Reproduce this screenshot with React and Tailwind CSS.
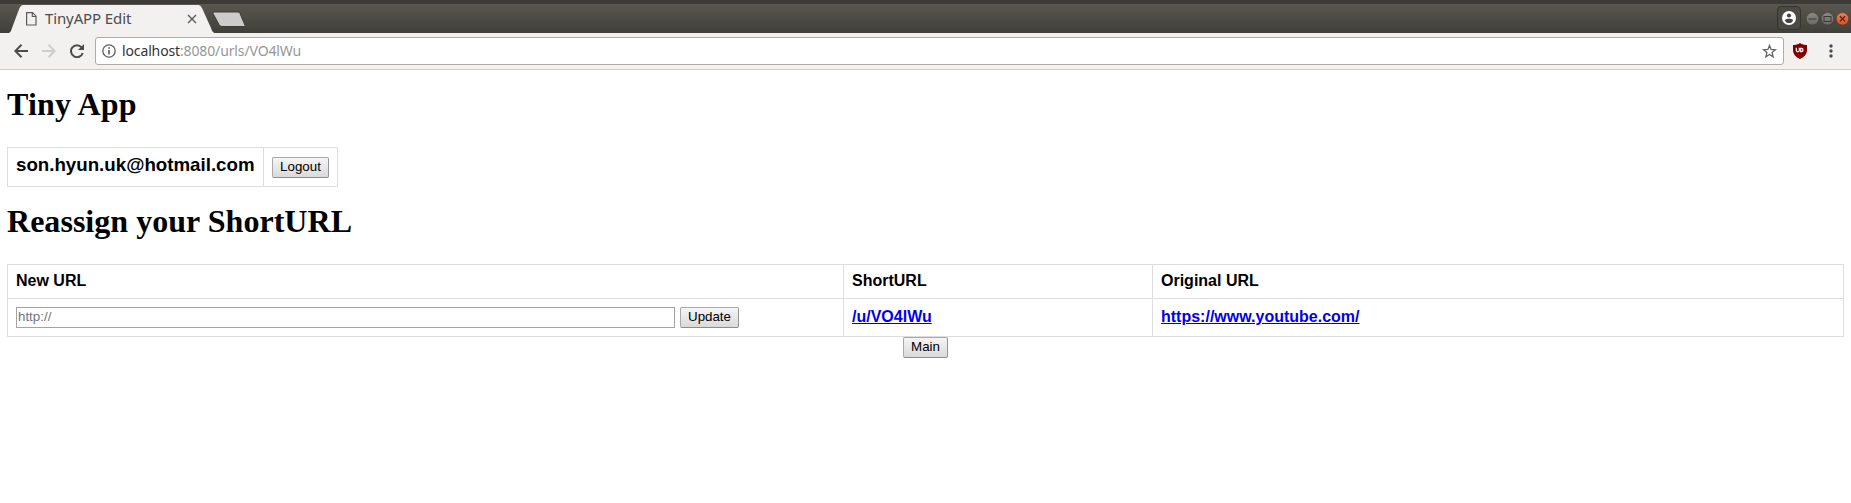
const buttonClass =
  'flex h-[21px] items-center justify-center rounded-[2px] border border-[#a9a9a9] border-b-[#8c8c8c] border-r-[#929292] bg-linear-to-b from-[#f5f5f5] to-[#dadada] pb-px text-[13.33px] leading-none text-black'

function WindowControls() {
  return (
    <svg width="50" height="29" viewBox="21 0 50 29" className="block">
      <defs>
        <linearGradient id="grey" x1="0" y1="0" x2="0" y2="1">
          <stop offset="0" stopColor="#8b8983" />
          <stop offset="1" stopColor="#6b6963" />
        </linearGradient>
        <linearGradient id="orange" x1="0" y1="0" x2="0" y2="1">
          <stop offset="0" stopColor="#f37b51" />
          <stop offset="1" stopColor="#e2511f" />
        </linearGradient>
      </defs>
      <circle cx="32.5" cy="14.8" r="6.2" fill="url(#grey)" stroke="#3b3a35" strokeWidth=".5" />
      <path d="M28.500 15h8" stroke="#3a3935" strokeWidth="1" />
      <circle cx="47.5" cy="14.8" r="6.2" fill="url(#grey)" stroke="#3b3a35" strokeWidth=".5" />
      <rect x="44" y="12.5" width="7" height="5" fill="none" stroke="#3a3935" strokeWidth="1" />
      <circle cx="62.5" cy="14.8" r="6.2" fill="url(#orange)" stroke="#3b3a35" strokeWidth=".5" />
      <path d="m59.900 12.200 5.200 5.200m0-5.200-5.200 5.200" stroke="#3f2c23" strokeWidth="1.3" />
    </svg>
  )
}

function TabStrip() {
  return (
    <div className="flex h-[29px] items-start bg-linear-to-b from-[#59574f] to-[#403f3a]">
      <div className="relative ml-[9px] h-[29px] w-[206px]">
        <svg width="206" height="29" viewBox="0 0 206 29" className="absolute inset-0">
          <path d="M0 29C2 28 2.200 26 3 24L10.500 4Q12 1 14 1H189.500Q191.500 1 193 4L202 24C203 27 203.500 28 205.500 29Z" fill="#f2f1f0" />
        </svg>
        <div className="relative flex h-[29px] items-center pl-[17px]">
          <svg width="11" height="14" viewBox="0 0 11 14" fill="none" stroke="#5a5a5a" strokeWidth="1.200">
            <path d="M.6.6H6.500L10 4.200V13H.6ZM6.300.8V4.500H10" />
          </svg>
          <span className="ml-2 w-[142px] font-['Noto_Sans',sans-serif] text-[15px] leading-none tracking-[-0.12px] text-[#4c4c4c]">
            TinyAPP Edit
          </span>
          <svg width="10" height="10" viewBox="0 0 10 10" stroke="#5a5a5a" strokeWidth="1.400">
            <path d="m1 1 8 8M9 1 1 9" />
          </svg>
        </div>
      </div>
      <svg width="36" height="17" viewBox="0 0 36 17" className="-ml-[4px] mt-[7px]">
        <path d="M3 1H27Q28.500 1 29 2.500L34.500 15.500H11Q9 15.500 8 13.500L2 2.500Q1.500 1 3 1Z" fill="#cdcccb" stroke="#3d3c38" />
      </svg>
      <div className="ml-auto flex h-[29px]">
        <div className="mt-[2px] flex h-6 w-6 items-center justify-center rounded-[4px] border border-[#35342f] bg-[#4a4943]">
          <svg width="14" height="14" viewBox="0 0 14 14">
            <circle cx="7" cy="7" r="7" fill="#fff" />
            <circle cx="7" cy="4.500" r="2.100" fill="#454440" />
            <path d="M2.800 9.400C3.700 8.200 5.500 7.800 7 7.800s3.300.4 4.200 1.600C10.400 11 8.800 12 7 12S3.600 11 2.800 9.400Z" fill="#454440" />
          </svg>
        </div>
        <WindowControls />
      </div>
    </div>
  )
}

function Toolbar() {
  return (
    <div className="flex h-[37px] items-center border-b border-[#cdcbc9] bg-[#f2f1f0] pl-[14px]">
      <svg width="14" height="14" viewBox="0 0 14 14" fill="none" stroke="#4c4c4c" strokeWidth="2">
        <path d="M14 7H1.500M7.500.8 1.300 7l6.200 6.200" />
      </svg>
      <svg width="14" height="14" viewBox="0 0 14 14" fill="none" stroke="#cfcdcb" strokeWidth="2" className="ml-[14px]">
        <path d="M0 7H12.500M6.500.8 12.700 7l-6.200 6.200" />
      </svg>
      <svg width="14" height="14" viewBox="0 0 14 14" className="ml-[14px]">
        <path d="M11.600 3.300A6 6 0 1 0 12.700 9" fill="none" stroke="#4c4c4c" strokeWidth="2" />
        <path d="M14 0V6H8Z" fill="#4c4c4c" />
      </svg>
      <div className="ml-[11px] flex h-7 w-[1689px] items-center rounded-[3px] border border-[#aeacaa] bg-white pl-[6px] pr-[6px]">
        <svg width="14" height="14" viewBox="0 0 14 14">
          <circle cx="7" cy="7" r="6.200" fill="none" stroke="#5a5a5a" strokeWidth="1.300" />
          <path d="M6.200 6h1.600v4.500H6.200zM6.200 3.300h1.600v1.500H6.200z" fill="#5a5a5a" />
        </svg>
        <span className="ml-[6px] pb-px font-['Noto_Sans',sans-serif] text-[14px] leading-none tracking-[-0.13px] text-[#979797]">
          <span className="text-[#333]">localhost</span>:8080/urls/VO4lWu
        </span>
        <svg width="15" height="14" viewBox="0 0 15 14" fill="none" stroke="#626262" strokeWidth="1.300" className="ml-auto">
          <path d="m7.500 1.500 1.600 4 4.300.3-3.300 2.800 1 4.200-3.600-2.300-3.600 2.300 1-4.200-3.300-2.800 4.300-.3Z" />
        </svg>
      </div>
      <svg width="14" height="16" viewBox="0 0 14 16" className="ml-[9px]">
        <path d="M7 0C9 1.500 11.500 2 14 2V7c0 4.500-3 7-7 9C3 14 0 11.500 0 7V2C2.500 2 5 1.500 7 0Z" fill="#800000" />
        <path d="M3.300 4.800v2.500a1.500 1.500 0 0 0 3 0V4.800M7.700 5.300v3.300h1a1.700 1.700 0 0 0 0-3.300Z" fill="none" stroke="#fff" strokeWidth="1.200" />
      </svg>
      <svg width="4" height="14" viewBox="0 0 4 14" fill="#4c4c4c" className="ml-[22px]">
        <circle cx="2" cy="2" r="1.700" />
        <circle cx="2" cy="7" r="1.700" />
        <circle cx="2" cy="12" r="1.700" />
      </svg>
    </div>
  )
}

const linkClass = 'text-[#0000ee] underline'

export default function App() {
  return (
    <div className="h-[503px] w-full overflow-hidden bg-white font-['Liberation_Sans',Arial,sans-serif] text-black">
      <div className="h-1 bg-[#3c3b37]" />
      <TabStrip />
      <Toolbar />
      <main className="px-[7px] pt-4">
        <h1 className="h-[61px] font-['Liberation_Serif',serif] text-[32px] font-bold leading-[37px] tracking-[0.15px]">Tiny App</h1>
        <div className="flex h-10 w-[331px] border border-[#dddddd]">
          <h3 className="w-64 border-r border-[#dddddd] pl-2 pt-[6px] text-[18.72px] font-bold leading-[21px]">
            son.hyun.uk@hotmail.com
          </h3>
          <div className="pl-2 pt-[9px]">
            <button className={`${buttonClass} w-[57px]`}>Logout</button>
          </div>
        </div>
        <h1 className="mt-4 h-[61px] font-['Liberation_Serif',serif] text-[32px] font-bold leading-[37px] tracking-[0.03px]">
          Reassign your ShortURL
        </h1>
        <div className="grid w-[1837px] grid-cols-[836px_309px_1fr] grid-rows-[34px_38px] border-l border-t border-[#dddddd] text-[16px] font-bold leading-[18px] *:border-b *:border-r *:border-[#dddddd] *:pl-2">
          <div className="pt-[7px]">New URL</div>
          <div className="pt-[7px]">ShortURL</div>
          <div className="pt-[7px]">Original URL</div>
          <form className="flex gap-[5px] pt-2">
            <input
              placeholder="http://"
              className="h-[21px] w-[659px] border border-[#a3a3a3] px-px pb-[2px] text-[13.33px] font-normal placeholder:text-[#757575]"
            />
            <button type="button" className={`${buttonClass} w-[59px] font-normal`}>
              Update
            </button>
          </form>
          <div className="pt-[9px]">
            <a href="#short" className={linkClass}>/u/VO4lWu</a>
          </div>
          <div className="pt-[9px]">
            <a href="#original" className={linkClass}>https://www.youtube.com/</a>
          </div>
        </div>
        <div className="flex justify-center">
          <button className={`${buttonClass} w-[45px]`}>Main</button>
        </div>
      </main>
    </div>
  )
}
